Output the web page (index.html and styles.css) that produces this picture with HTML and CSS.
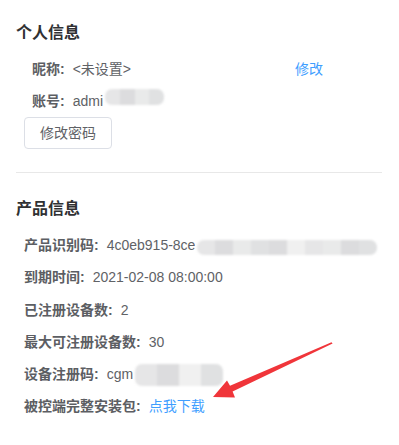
FILE: index.html
```html
<!DOCTYPE html>
<html lang="zh-CN">
<head>
<meta charset="utf-8">
<title>个人信息</title>
<link rel="stylesheet" href="styles.css">
</head>
<body>
<div class="page">
  <section class="sec sec-personal">
    <h2 class="title">个人信息</h2>
    <div class="prow first">
      <div class="cell"><span class="label">昵称:</span><span class="val">&lt;未设置&gt;</span></div>
      <a class="link" href="#">修改</a>
    </div>
    <div class="prow">
      <div class="cell"><span class="label">账号:</span><span class="val">admi</span><span class="blur b-acc"><i class="c1"></i><i class="c2"></i><i class="c3"></i><i class="c4"></i></span></div>
    </div>
    <button class="btn" type="button">修改密码</button>
  </section>
  <hr class="divider">
  <section class="sec sec-product">
    <h2 class="title">产品信息</h2>
    <div class="row"><span class="label">产品识别码:</span><span class="val">4c0eb915-8ce</span><span class="blur b-id"><i class="c1"></i><i class="c2"></i><i class="c3"></i><i class="c4"></i><i class="c2"></i><i class="c5"></i><i class="c1"></i><i class="c3"></i><i class="c2"></i><i class="c4"></i></span></div>
    <div class="row"><span class="label">到期时间:</span><span class="val">2021-02-08 08:00:00</span></div>
    <div class="row"><span class="label">已注册设备数:</span><span class="val">2</span></div>
    <div class="row"><span class="label">最大可注册设备数:</span><span class="val">30</span></div>
    <div class="row"><span class="label">设备注册码:</span><span class="val">cgm</span><span class="blur b-code"><i class="c1"></i><i class="c2"></i><i class="c5"></i><i class="c4"></i></span></div>
    <div class="row"><span class="label">被控端完整安装包:</span><a class="link" href="#">点我下载</a></div>
  </section>
  <svg class="arrow" width="399" height="445" viewBox="0 0 399 445" aria-hidden="true">
    <polygon points="213,397 227,380.5 230,385.8 331.5,342.3 332.6,343.6 232.6,391.4 235,397.6" fill="#f0353a"/>
  </svg>
</div>
</body>
</html>
```
FILE: styles.css
```css
html, body {
  margin: 0;
  padding: 0;
  background: #ffffff;
}
body {
  font-family: "Liberation Sans", "Noto Sans CJK SC", sans-serif;
  font-size: 14px;
  color: #606266;
}
.page {
  position: relative;
  width: 399px;
  height: 445px;
  overflow: hidden;
}
.sec {
  padding-left: 16px;
}
.sec-personal {
  padding-top: 23px;
}
.title {
  margin: 0 0 10px 0;
  font-size: 16px;
  line-height: 20px;
  font-weight: bold;
  color: #303133;
}
.prow {
  display: grid;
  grid-template-columns: 263px auto;
  padding-left: 16px;
  height: 32px;
  line-height: 32px;
}
.cell {
  display: flex;
  align-items: center;
  white-space: nowrap;
}
.label {
  font-weight: bold;
  color: #5c5e63;
  margin-right: 8px;
}
.val {
  color: #606266;
  white-space: nowrap;
}
.link {
  color: #409eff;
  text-decoration: none;
}
.btn {
  display: block;
  margin-left: 8px;
  width: 88px;
  height: 32px;
  padding: 0 15px;
  border: 1px solid #dcdfe6;
  border-radius: 4px;
  background: #ffffff;
  color: #606266;
  font-family: "Liberation Sans", "Noto Sans CJK SC", sans-serif;
  font-size: 14px;
  line-height: 30px;
}
.divider {
  margin: 23px 17px 0 16px;
  border: 0;
  border-top: 1px solid #e8e8e8;
  height: 0;
}
.sec-product {
  padding-top: 26px;
}
.row {
  display: flex;
  align-items: center;
  padding-left: 8px;
  height: 32px;
  line-height: 32px;
  white-space: nowrap;
}
.sec-product .row:nth-of-type(3) {
  height: 33px;
}
.blur {
  display: inline-flex;
  border-radius: 7px;
  overflow: hidden;
  filter: blur(0.8px);
}
.blur i {
  display: block;
  flex: 1;
}
.c1 { background: #e6e6e7; }
.c2 { background: #dcdcde; }
.c3 { background: #e9eaea; }
.c4 { background: #e0e1e2; }
.c5 { background: #f0f0f0; }
.b-acc {
  width: 59px;
  height: 16px;
  margin-left: 2px;
  margin-top: -8px;
}
.b-id {
  width: 180px;
  height: 15px;
  margin-left: 2px;
  margin-top: 4px;
}
.b-code {
  width: 88px;
  height: 22px;
  margin-left: 2px;
  margin-top: 2px;
}
.arrow {
  position: absolute;
  left: 0;
  top: 0;
  pointer-events: none;
}
```
